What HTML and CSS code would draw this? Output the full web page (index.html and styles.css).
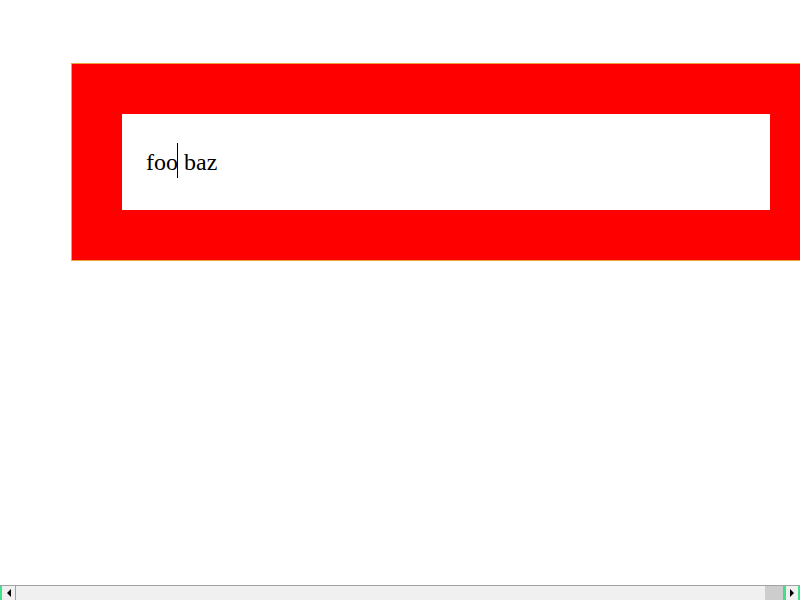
FILE: index.html
```html
<!DOCTYPE html>
<html>
<head>
<meta charset="utf-8">
<link rel="stylesheet" href="styles.css">
</head>
<body>
<div class="viewport">
  <div class="frame">
    <div class="field">
      <span class="text"><span class="before">foo<span class="caret"></span></span> baz</span>
    </div>
  </div>
</div>
<div class="scrollbar">
  <div class="sb-btn sb-left"><span class="arrow arrow-left"></span></div>
  <div class="sb-thumb"></div>
  <div class="sb-track"></div>
  <div class="sb-btn sb-right"><span class="arrow arrow-right"></span></div>
</div>
</body>
</html>
```
FILE: styles.css
```css
html, body {
  height: 100%;
  background: #fff;
}
body {
  margin: 0;
  display: flex;
  flex-direction: column;
  font-family: "Liberation Serif", "Times New Roman", Tinos, "DejaVu Serif", serif;
}
.viewport {
  flex: 1;
  overflow: hidden;
  padding: 8px;
}
.frame {
  margin: 55px 0 0 63px;
  width: 648px;
  padding: 50px;
  background: #ff0000;
  border: 1px solid #eba53c;
}
.field {
  display: flex;
  align-items: center;
  height: 96px;
  padding: 0 24px;
  box-sizing: border-box;
  background: #fff;
  font-size: 24px;
  color: #000;
}
.text {
  white-space: pre;
}
.before {
  position: relative;
}
.caret {
  position: absolute;
  right: 0;
  bottom: -3px;
  width: 1px;
  height: 35px;
  background: #000;
}
.scrollbar {
  flex: none;
  height: 15px;
  box-sizing: border-box;
  display: flex;
  border-top: 1px solid #a3a3a3;
  background: #f0f0f0;
}
.sb-btn {
  width: 16px;
  box-sizing: border-box;
  display: flex;
  align-items: center;
  justify-content: center;
  background: #f0f0f0;
}
.sb-left {
  border-left: 2px solid #40e08c;
  border-right: 1px solid #a3a3a3;
}
.sb-right {
  border-left: 2px solid #40e08c;
  border-right: 2px solid #40e08c;
}
.sb-thumb {
  width: 749px;
  background: #f0f0f0;
}
.sb-track {
  flex: 1;
  background: #cdcdcd;
  border-right: 1px solid #a3a3a3;
}
.arrow {
  width: 0;
  height: 0;
  border-top: 4px solid transparent;
  border-bottom: 4px solid transparent;
}
.arrow-left {
  border-right: 4px solid #000;
}
.arrow-right {
  border-left: 4px solid #000;
}
```
